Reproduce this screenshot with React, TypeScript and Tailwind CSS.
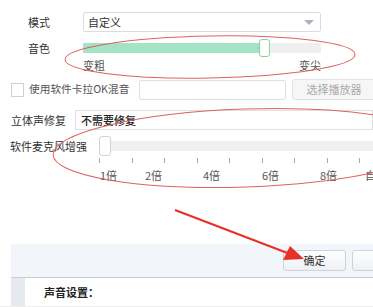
import React from 'react';

const ticks = [0, 1, 2, 3, 4, 5, 6, 7, 8];

export default function App() {
  return (
    <div
      className="relative w-[373px] h-[307px] overflow-hidden bg-white text-[11px] text-[#333]"
      style={{ fontFamily: '"Noto Sans CJK SC", "Noto Sans", sans-serif' }}
    >
      {/* 模式 */}
      <div className="flex items-center pt-[12px] pl-[28px]">
        <div className="w-[55px]">模式</div>
        <div className="flex items-center justify-between w-[238px] h-[20px] border border-[#d9dde3] rounded-[2px] pl-[4px] pr-[6px]">
          <span>自定义</span>
          <span className="w-0 h-0 border-l-[5px] border-r-[5px] border-t-[5px] border-l-transparent border-r-transparent border-t-[#a9b3bf]" />
        </div>
      </div>

      {/* 音色 */}
      <div className="flex items-center mt-[7px] pl-[28px] h-[18px]">
        <div className="w-[55px]">音色</div>
        <div className="relative w-[238px] h-[10px] bg-[#f0f0f0]">
          <div className="h-full w-[181px] bg-[#a5e3c6]" />
          <div className="absolute left-[176px] top-[-4px] w-[11px] h-[18px] bg-white border border-[#82d3ab] rounded-[3px]" />
        </div>
      </div>
      <div className="flex justify-between w-[238px] ml-[83px] mt-[1px] leading-[14px] text-[#555]">
        <span>变粗</span>
        <span>变尖</span>
      </div>

      {/* 卡拉OK */}
      <div className="flex items-center mt-[7px] pl-[11px] h-[21px]">
        <div className="shrink-0 w-[13px] h-[14px] border border-[#ccd2d9] bg-white" />
        <span className="ml-[5px] w-[110px] shrink-0 whitespace-nowrap text-[10.7px] text-[#555]">使用软件卡拉OK混音</span>
        <div className="shrink-0 w-[147px] h-[20px] border border-[#dcdfe4] rounded-[2px]" />
        <button className="shrink-0 ml-[6px] w-[84px] h-[21px] border border-[#dfe2e6] rounded-[3px] bg-[#f6f6f6] text-[#aaa]">选择播放器</button>
      </div>

      {/* 立体声修复 */}
      <div className="flex items-center mt-[10px] pl-[11px]">
        <span className="w-[64px]">立体声修复</span>
        <div className="flex items-center flex-1 h-[20px] border border-[#dcdfe4] pl-[5px] font-medium text-[#222]">不需要修复</div>
      </div>

      {/* 软件麦克风增强 */}
      <div className="flex items-center mt-[6px] pl-[10px] h-[20px]">
        <span className="w-[89px]">软件麦克风增强</span>
        <div className="relative flex-1 h-[10px] bg-[#f0f0f0]">
          <div className="absolute left-0 top-[-5px] w-[12px] h-[20px] bg-white border border-[#cfd3d8] rounded-[3px]" />
        </div>
      </div>
      <div className="flex ml-[99px] mt-[2px] h-[6px]">
        {ticks.map((t) => (
          <div key={t} className="w-[32.5px] shrink-0">
            <div className="w-px h-[5px] bg-[#aaa]" />
          </div>
        ))}
      </div>
      <div className="flex ml-[100px] mt-[4px] leading-[14px] text-[#555] whitespace-nowrap">
        <span className="w-[45px] shrink-0">1倍</span>
        <span className="w-[58px] shrink-0">2倍</span>
        <span className="w-[59px] shrink-0">4倍</span>
        <span className="w-[58px] shrink-0">6倍</span>
        <span className="w-[45px] shrink-0">8倍</span>
        <span className="shrink-0">自</span>
      </div>

      {/* footer */}
      <div className="flex items-center ml-[11px] mt-[62px] h-[34px] bg-[#f2f5fa] border-b border-[#c9cdd2] pl-[272px] gap-[6px]">
        <button className="shrink-0 w-[63px] h-[21px] border border-[#cfd2d6] rounded-[3px] bg-gradient-to-b from-white to-[#eef0f3] text-[#333]">确定</button>
        <button className="shrink-0 w-[40px] h-[21px] border border-[#cfd2d6] rounded-[3px] bg-gradient-to-b from-white to-[#eef0f3]" />
      </div>
      <div className="flex ml-[11px] h-[28px]">
        <div className="w-[14px] bg-[#e6eaee]" />
        <div className="ml-[19px] flex items-center font-bold text-[#222]">声音设置：</div>
      </div>
      <div className="h-[2px] bg-[#eeeeee]" />

      {/* annotations */}
      <svg className="absolute left-0 top-0 pointer-events-none" width="373" height="307">
        <ellipse cx="210" cy="57" rx="145" ry="21" fill="none" stroke="#e06060" strokeWidth="1" transform="rotate(-1 210 57)" />
        <ellipse cx="245" cy="148" rx="192" ry="39" fill="none" stroke="#e06060" strokeWidth="1" transform="rotate(-2 245 148)" />
        <line x1="175" y1="210" x2="290" y2="254" stroke="#e8302a" strokeWidth="2.2" />
        <polygon points="304,259 283,260 290,246" fill="#e8302a" />
      </svg>
    </div>
  );
}
